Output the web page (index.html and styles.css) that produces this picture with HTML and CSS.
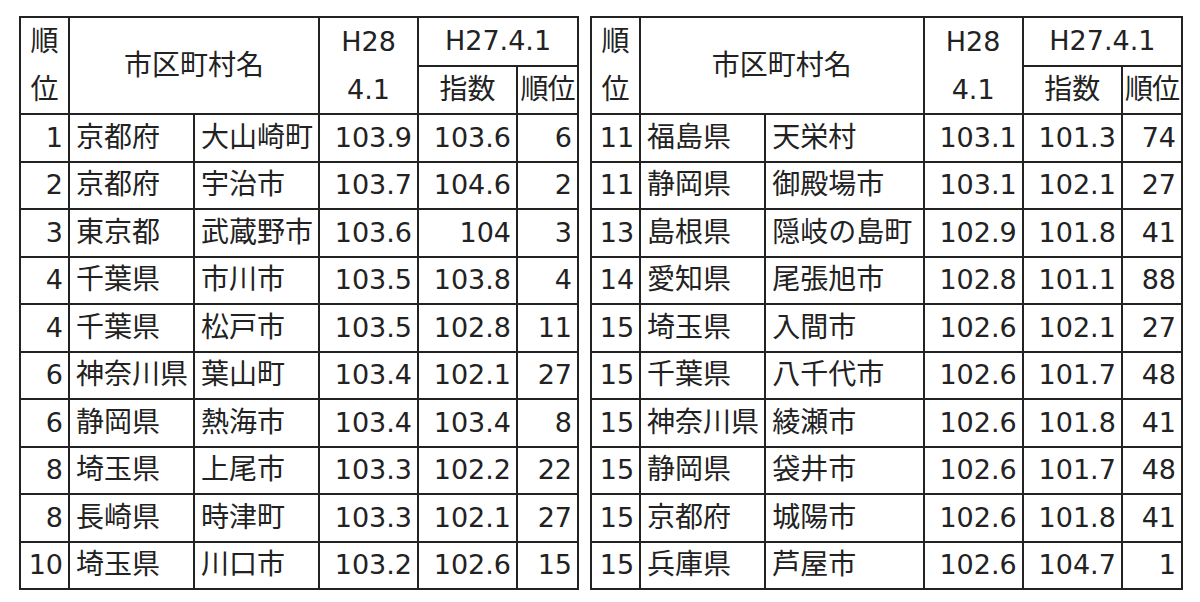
FILE: index.html
```html
<!DOCTYPE html>
<html lang="ja">
<head>
<meta charset="utf-8">
<link rel="stylesheet" href="styles.css">
</head>
<body>
<div class="page">
  <table class="rank rank-left">
    <colgroup>
      <col class="c-rank"><col class="c-pref"><col class="c-city-l"><col class="c-num"><col class="c-num"><col class="c-prev">
    </colgroup>
    <thead>
      <tr>
        <th rowspan="2" class="h2l jp">順<br>位</th>
        <th rowspan="2" colspan="2" class="jp">市区町村名</th>
        <th rowspan="2" class="h2l">H28<br>4.1</th>
        <th colspan="2">H27.4.1</th>
      </tr>
      <tr>
        <th class="jp">指数</th>
        <th class="jp tight">順位</th>
      </tr>
    </thead>
    <tbody>
      <tr><td class="n">1</td><td>京都府</td><td>大山崎町</td><td class="n">103.9</td><td class="n">103.6</td><td class="n">6</td></tr>
      <tr><td class="n">2</td><td>京都府</td><td>宇治市</td><td class="n">103.7</td><td class="n">104.6</td><td class="n">2</td></tr>
      <tr><td class="n">3</td><td>東京都</td><td>武蔵野市</td><td class="n">103.6</td><td class="n">104</td><td class="n">3</td></tr>
      <tr><td class="n">4</td><td>千葉県</td><td>市川市</td><td class="n">103.5</td><td class="n">103.8</td><td class="n">4</td></tr>
      <tr><td class="n">4</td><td>千葉県</td><td>松戸市</td><td class="n">103.5</td><td class="n">102.8</td><td class="n">11</td></tr>
      <tr><td class="n">6</td><td>神奈川県</td><td>葉山町</td><td class="n">103.4</td><td class="n">102.1</td><td class="n">27</td></tr>
      <tr><td class="n">6</td><td>静岡県</td><td>熱海市</td><td class="n">103.4</td><td class="n">103.4</td><td class="n">8</td></tr>
      <tr><td class="n">8</td><td>埼玉県</td><td>上尾市</td><td class="n">103.3</td><td class="n">102.2</td><td class="n">22</td></tr>
      <tr><td class="n">8</td><td>長崎県</td><td>時津町</td><td class="n">103.3</td><td class="n">102.1</td><td class="n">27</td></tr>
      <tr><td class="n">10</td><td>埼玉県</td><td>川口市</td><td class="n">103.2</td><td class="n">102.6</td><td class="n">15</td></tr>
    </tbody>
  </table>

  <table class="rank rank-right">
    <colgroup>
      <col class="c-rank"><col class="c-pref"><col class="c-city-r"><col class="c-num"><col class="c-num"><col class="c-prev-r">
    </colgroup>
    <thead>
      <tr>
        <th rowspan="2" class="h2l jp">順<br>位</th>
        <th rowspan="2" colspan="2" class="jp">市区町村名</th>
        <th rowspan="2" class="h2l">H28<br>4.1</th>
        <th colspan="2">H27.4.1</th>
      </tr>
      <tr>
        <th class="jp">指数</th>
        <th class="jp tight">順位</th>
      </tr>
    </thead>
    <tbody>
      <tr><td class="n">11</td><td>福島県</td><td>天栄村</td><td class="n">103.1</td><td class="n">101.3</td><td class="n">74</td></tr>
      <tr><td class="n">11</td><td>静岡県</td><td>御殿場市</td><td class="n">103.1</td><td class="n">102.1</td><td class="n">27</td></tr>
      <tr><td class="n">13</td><td>島根県</td><td>隠岐の島町</td><td class="n">102.9</td><td class="n">101.8</td><td class="n">41</td></tr>
      <tr><td class="n">14</td><td>愛知県</td><td>尾張旭市</td><td class="n">102.8</td><td class="n">101.1</td><td class="n">88</td></tr>
      <tr><td class="n">15</td><td>埼玉県</td><td>入間市</td><td class="n">102.6</td><td class="n">102.1</td><td class="n">27</td></tr>
      <tr><td class="n">15</td><td>千葉県</td><td>八千代市</td><td class="n">102.6</td><td class="n">101.7</td><td class="n">48</td></tr>
      <tr><td class="n">15</td><td>神奈川県</td><td>綾瀬市</td><td class="n">102.6</td><td class="n">101.8</td><td class="n">41</td></tr>
      <tr><td class="n">15</td><td>静岡県</td><td>袋井市</td><td class="n">102.6</td><td class="n">101.7</td><td class="n">48</td></tr>
      <tr><td class="n">15</td><td>京都府</td><td>城陽市</td><td class="n">102.6</td><td class="n">101.8</td><td class="n">41</td></tr>
      <tr><td class="n">15</td><td>兵庫県</td><td>芦屋市</td><td class="n">102.6</td><td class="n">104.7</td><td class="n">1</td></tr>
    </tbody>
  </table>
</div>
</body>
</html>
```

FILE: styles.css
```css
html, body {
  margin: 0;
  padding: 0;
  background: #ffffff;
}

.page {
  display: flex;
  align-items: flex-start;
  gap: 11px;
  padding: 16px 0 0 19px;
  font-family: "DejaVu Sans", "Noto Sans CJK JP", sans-serif;
  font-size: 27px;
  color: #222222;
}

.rank {
  border-collapse: collapse;
  table-layout: fixed;
  border: 2px solid #222;
}

.rank-left { width: 560px; }
.rank-right { width: 593px; }

.c-rank { width: 49px; }
.c-pref { width: 125px; }
.c-city-l { width: 125px; }
.c-city-r { width: 158px; }
.c-num { width: 99px; }
.c-prev { width: 61px; }
.c-prev-r { width: 60px; }

.rank th,
.rank td {
  border: 2px solid #222;
  height: 47.5px;
  padding: 0 6px;
  line-height: 30px;
  font-weight: normal;
  white-space: nowrap;
  overflow: hidden;
  box-sizing: border-box;
}

.rank th {
  text-align: center;
  padding: 0;
}

.rank th.jp,
.rank td:not(.n) {
  font-size: 28px;
}

.rank th.h2l {
  line-height: 47.5px;
}

.rank th.tight {
  letter-spacing: -1px;
}

.rank td {
  text-align: left;
  padding-left: 6px;
}

.rank td.n {
  text-align: right;
  padding-right: 5px;
}
```
